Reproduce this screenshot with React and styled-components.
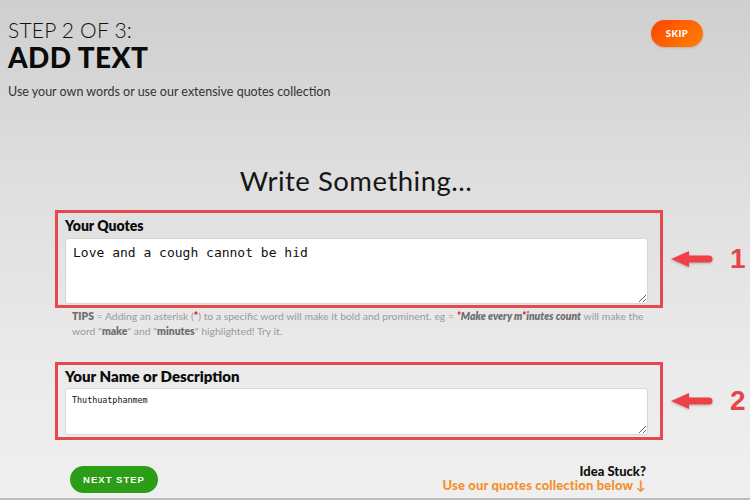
import React from 'react';
import styled, { createGlobalStyle } from 'styled-components';

const GlobalStyle = createGlobalStyle`
  html, body {
    margin: 0;
    padding: 0;
  }
  body {
    font-family: Lato, "Noto Sans", Arial, sans-serif;
    color: #111;
  }
`;

const Page = styled.div`
  box-sizing: border-box;
  width: 750px;
  height: 500px;
  overflow: hidden;
  background: linear-gradient(180deg, #cfcfcf 0%, #dedede 35%, #ebebeb 75%, #efefef 100%);
  border-bottom: 2px solid #bcbcbc;
`;

const Header = styled.header`
  display: flex;
  justify-content: space-between;
  align-items: flex-start;
  padding: 18px 47px 0 8px;
`;

const TitleBlock = styled.div`
  display: flex;
  flex-direction: column;
`;

const StepLabel = styled.div`
  font-size: 21px;
  font-weight: 300;
  line-height: 24px;
  letter-spacing: 0.2px;
  color: #111;
`;

const Title = styled.h1`
  margin: 0;
  font-size: 28px;
  font-weight: 900;
  line-height: 30px;
  letter-spacing: 0.4px;
  color: #0b0b0b;
`;

const Subtitle = styled.p`
  margin: 12px 0 0;
  font-size: 12.5px;
  line-height: 16px;
  color: #333;
`;

const SkipButton = styled.button`
  margin-top: 2px;
  width: 52px;
  height: 27px;
  border: none;
  border-radius: 14px;
  background: linear-gradient(135deg, #ff4200 0%, #ff6a00 60%, #ff8000 100%);
  color: #fff;
  font-family: Lato, Arial, sans-serif;
  font-size: 9.5px;
  font-weight: 900;
  letter-spacing: 0.4px;
  box-shadow: 0 1px 2px rgba(0, 0, 0, 0.15);
`;

const Heading = styled.h2`
  margin: 65px 0 0;
  padding-right: 38px;
  text-align: center;
  font-size: 27.5px;
  font-weight: 400;
  line-height: 32px;
  letter-spacing: 0.5px;
  color: #161616;
`;

const FieldRow = styled.div`
  display: flex;
  align-items: center;
  padding-left: 55px;
  margin-top: ${(props) => props.$top}px;
`;

const FieldBox = styled.div`
  box-sizing: border-box;
  width: 608px;
  border: 3px solid #e6484b;
  padding: ${(props) => props.$padTop}px 12px ${(props) => props.$padBottom}px 7px;
  display: flex;
  flex-direction: column;
`;

const FieldLabel = styled.label`
  font-size: ${(props) => props.$size}px;
  font-weight: 800;
  line-height: 18px;
  color: #0d0d0d;
  margin-bottom: 3px;
`;

const TextArea = styled.textarea`
  box-sizing: border-box;
  width: 583px;
  height: ${(props) => props.$height}px;
  resize: vertical;
  border: 1px solid #d6d6d6;
  border-radius: 3px;
  background: #fff;
  padding: ${(props) => props.$pad};
  font-family: "DejaVu Sans Mono", "Liberation Mono", monospace;
  font-size: ${(props) => props.$size}px;
  color: #111;
  outline: none;
`;

const Marker = styled.div`
  display: flex;
  align-items: center;
  margin-left: 7px;
  gap: 16px;
`;

const MarkerNumber = styled.span`
  font-family: "Liberation Sans", Arial, sans-serif;
  font-size: 28px;
  font-weight: 700;
  line-height: 28px;
  color: #e6444a;
`;

const Tips = styled.p`
  margin: 1px 0 0 72px;
  width: 585px;
  font-size: 10.4px;
  line-height: 15px;
  color: #9a9a9a;

  .strong {
    color: #6f6f6f;
    font-weight: 800;
  }
  .star {
    color: #e0262b;
    font-weight: 800;
  }
  .example {
    color: #6f6f6f;
    font-weight: 800;
    font-style: italic;
  }
`;

const Footer = styled.div`
  display: flex;
  justify-content: space-between;
  align-items: flex-end;
  margin: 24px 0 0 70px;
  width: 576px;
`;

const NextButton = styled.button`
  width: 88px;
  height: 27px;
  border: none;
  border-radius: 14px;
  background: #2c9d16;
  color: #fff;
  font-family: "Liberation Sans", Arial, sans-serif;
  font-size: 9.5px;
  font-weight: 700;
  letter-spacing: 1px;
`;

const Help = styled.div`
  text-align: right;
  font-weight: 900;
  font-size: 13px;
  line-height: 14px;
  margin-bottom: 1px;
`;

const HelpLink = styled.div`
  color: #f3912d;
  letter-spacing: 0.15px;
`;

function Arrow() {
  return (
    <svg width="44" height="20" viewBox="0 0 44 20">
      <defs>
        <filter id="arrowShadow" x="-20%" y="-30%" width="140%" height="160%">
          <feDropShadow dx="0" dy="1" stdDeviation="0.8" floodColor="#000" floodOpacity="0.25" />
        </filter>
      </defs>
      <g filter="url(#arrowShadow)" fill="#ec4347">
        <path d="M1 10 L19 2 L19 18 Z" />
        <path d="M17 6.5 H39 A3.5 3.5 0 0 1 39 13.5 H17 Z" />
      </g>
    </svg>
  );
}

function Field({
  label, labelSize, padTop, padBottom, value, height, pad, size, number, top,
}) {
  return (
    <FieldRow $top={top}>
      <FieldBox $padTop={padTop} $padBottom={padBottom}>
        <FieldLabel $size={labelSize}>{label}</FieldLabel>
        <TextArea value={value} readOnly $height={height} $pad={pad} $size={size} />
      </FieldBox>
      <Marker>
        <Arrow />
        <MarkerNumber>{number}</MarkerNumber>
      </Marker>
    </FieldRow>
  );
}

export default function App() {
  return (
    <>
      <GlobalStyle />
      <Page>
        <Header>
          <TitleBlock>
            <StepLabel>STEP 2 OF 3:</StepLabel>
            <Title>ADD TEXT</Title>
            <Subtitle>Use your own words or use our extensive quotes collection</Subtitle>
          </TitleBlock>
          <SkipButton>SKIP</SkipButton>
        </Header>

        <Heading>Write Something...</Heading>

        <Field
          top={13}
          label="Your Quotes"
          labelSize={14}
          padTop={4}
          padBottom={1}
          value="Love and a cough cannot be hid"
          height={66}
          pad="6px 7px"
          size={13}
          number="1"
        />

        <Tips>
          <span className="strong">TIPS</span>
          <span> = Adding an asterisk (</span>
          <span className="star">*</span>
          <span>) to a specific word will make it bold and prominent. eg = </span>
          <span className="example"><span className="star">*</span>Make every m<span className="star">*</span>inutes count</span>
          <span> will make the word "</span>
          <span className="strong">make</span>
          <span>" and "</span>
          <span className="strong">minutes</span>
          <span>" highlighted! Try it.</span>
        </Tips>

        <Field
          top={23}
          label="Your Name or Description"
          labelSize={15}
          padTop={2}
          padBottom={2}
          value="Thuthuatphanmem"
          height={47}
          pad="6px 6px"
          size={8.4}
          number="2"
        />

        <Footer>
          <NextButton>NEXT STEP</NextButton>
          <Help>
            <div>Idea Stuck?</div>
            <HelpLink>Use our quotes collection below ↓</HelpLink>
          </Help>
        </Footer>
      </Page>
    </>
  );
}
